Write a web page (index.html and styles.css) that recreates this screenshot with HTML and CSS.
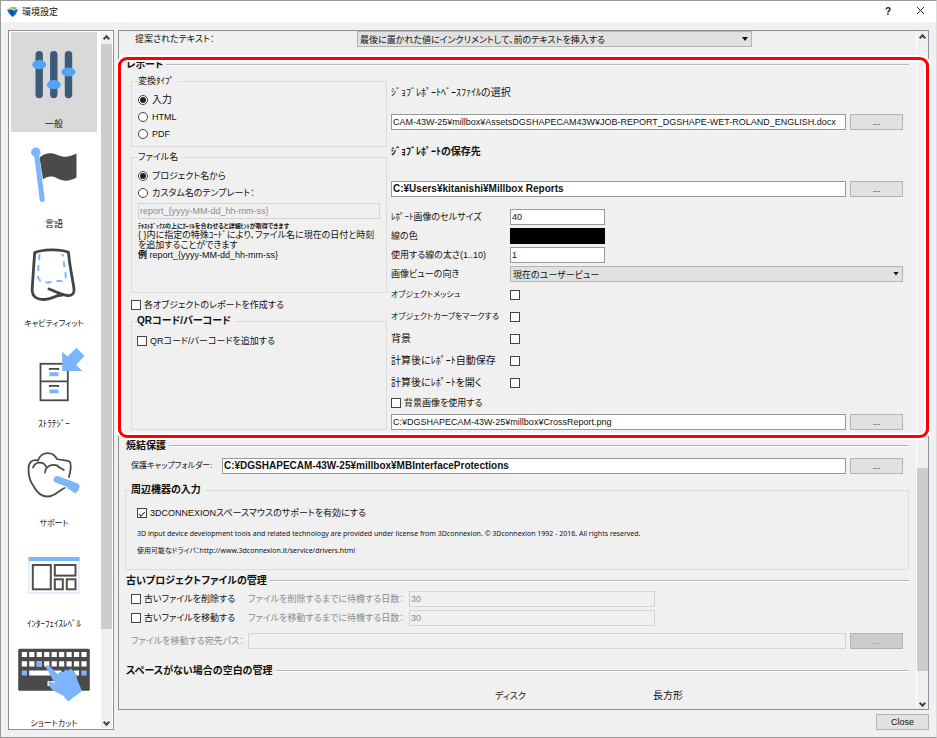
FILE: index.html
```html
<!DOCTYPE html>
<html lang="ja">
<head>
  <meta charset="UTF-8">
  <meta name="viewport" content="width=device-width, initial-scale=1.0">
  <title>環境設定</title>
  <link rel="stylesheet" href="styles.css">
</head>
<body>
  <div class="dialog">
    <!-- Title bar -->
    <header class="titlebar">
      <svg class="logo" viewBox="0 0 12 12">
        <path d="M1 3 Q5 0 11 2 L9 4 Q5 2 1 3Z" fill="#7fb93c"/>
        <path d="M0 4 Q5 3 8 5 L12 3 Q11 9 6 12 Q2 9 0 4Z" fill="#1268c3"/>
        <path d="M3 5 Q6 5 7 8 L6 10Z" fill="#0a3f86"/>
      </svg>
      <h1>環境設定</h1>
      <button class="title-btn" aria-label="ヘルプ">?</button>
      <button class="title-btn" aria-label="閉じる">
        <svg width="9" height="9" viewBox="0 0 9 9"><path d="M1 1 L8 8 M8 1 L1 8" stroke="#222" fill="none"/></svg>
      </button>
    </header>

    <div class="content">
      <!-- Category list -->
      <nav class="sidebar">
        <div class="categories">
          <a class="category active" href="#general">
            <svg viewBox="0 0 85 84">
              <g stroke="#3a5c78" stroke-width="7.4" stroke-linecap="round">
                <path d="M27.7 22.7V62.5M42.3 22.7V62.5M57 22.7V62.5"/>
              </g>
              <g fill="#55a3f0">
                <ellipse cx="27.7" cy="32.7" rx="7" ry="4.6"/>
                <ellipse cx="42.3" cy="52.7" rx="7" ry="4.6"/>
                <ellipse cx="57" cy="40" rx="7" ry="4.6"/>
              </g>
            </svg>
            <span>一般</span>
          </a>
          <a class="category" href="#language">
            <svg viewBox="0 0 85 84">
              <path d="M28 25.5 C34 20.5 40 20.5 46 23 C54 26.5 59 24 65 21.5 V45.5 C58 49.5 52 49.5 46 46.5 C40 43 35 45 31.5 47.5Z" fill="#4a4a4a"/>
              <path d="M25 22 L30.7 67.5" stroke="#7cb5fb" stroke-width="5" stroke-linecap="round"/>
              <circle cx="24.3" cy="20.3" r="4.7" fill="#7cb5fb"/>
            </svg>
            <span>言語</span>
          </a>
          <a class="category" href="#cavity">
            <svg viewBox="0 0 85 84">
              <g fill="none" stroke="#444" stroke-width="2.8" stroke-linecap="round" stroke-linejoin="round">
                <path d="M23.3 20.7 C30 17.5 48 16.5 57 20.3 C58 34 61 46 62.5 57 C63 62 60 64 56 63.5 C49 63 45 59.5 37.5 57"/>
                <path d="M23.3 20.7 C22 34 21.5 46 20.7 57 C20.5 65 25 67.5 33 67.5 C41 67.5 43 63 51 63"/>
              </g>
              <path d="M28 22 C27.5 30 26.5 36 26.5 45 C27.5 49 31 50.5 35 50.5 C41 50.5 43 48.5 51 49.3 C55 50 54.5 44 53.5 38 L51 22" fill="none" stroke="#7cb5fb" stroke-width="2" stroke-dasharray="6 5"/>
            </svg>
            <span class="kana">キャビティフィット</span>
          </a>
          <a class="category" href="#strategy">
            <svg viewBox="0 0 85 84">
              <g fill="none" stroke="#4a4a4a" stroke-width="1.8">
                <rect x="29" y="31.8" width="27.3" height="36.5"/>
                <path d="M29 49.3H56.3M38.3 38V36.8H46.7V38M38.3 55V53.8H46.7V55"/>
              </g>
              <path d="M38 40.3H47V44.3H38ZM38 57.5H47V61.3H38Z" fill="#7cb5fb"/>
              <path d="M50.7 39 V19.7 L56 24.5 L65 15.7 L73 24 L64.7 33 L71 39Z" fill="#7cb5fb"/>
            </svg>
            <span>ｽﾄﾗﾃｼﾞｰ</span>
          </a>
          <a class="category" href="#support">
            <svg viewBox="0 0 85 84">
              <g fill="none" stroke="#4a4a4a" stroke-width="1.8" stroke-linecap="round">
                <path d="M26.5 28.5 C20 27 17 31 17 37 C17 46 19.5 51 22 54 C25 60 29 64.5 36 64.5 C43 64.5 48 58 53 56"/>
                <path d="M26.5 28.5 C30 19 41 19 45.5 27 C51 29 54 27 58 29.5 C61 33 58.5 40 57.5 45"/>
                <path d="M21.5 35.5 C24 29 32 29.5 34.5 34.5"/>
                <path d="M33.5 40.5 C34 34 40 32 45.5 33.3 C47 36 50 36 52.3 38"/>
              </g>
              <path d="M45.7 47.5 L64.5 54.5" stroke="#7cb5fb" stroke-width="7" stroke-linecap="round"/>
              <path d="M54 55 L64 61.5 L68 57Z" fill="#7cb5fb"/>
            </svg>
            <span class="kana">サポート</span>
          </a>
          <a class="category" href="#level">
            <svg viewBox="0 0 85 84">
              <rect x="17.5" y="25.5" width="50" height="35.5" fill="#fff" stroke="#c9e0fd"/>
              <rect x="17" y="25" width="51" height="4" fill="#7cb5fb"/>
              <g fill="none" stroke="#4f4f4f" stroke-width="2">
                <rect x="21.3" y="33" width="18" height="24.3"/>
                <rect x="43.3" y="33" width="20.7" height="10.6"/>
                <rect x="43.3" y="47.3" width="8" height="10"/>
                <rect x="55.3" y="47.3" width="8.7" height="10"/>
              </g>
            </svg>
            <span>ｲﾝﾀｰﾌｪｲｽﾚﾍﾞﾙ</span>
          </a>
          <a class="category" href="#shortcut">
            <svg viewBox="0 0 85 84">
              <rect x="6.7" y="16.7" width="71.6" height="42" rx="1.5" fill="#4a4a4a"/>
              <g fill="none" stroke="#fff" stroke-width="5.2">
                <path d="M10.3 22.5H76" stroke-dasharray="5.2 2.25"/>
                <path d="M10.3 31.8H76" stroke-dasharray="5.2 2.25"/>
                <path d="M17.7 41H50M62.3 41H67.5M36 51.5H50"/>
              </g>
              <path d="M25.2 29.2h5.2v5.2h-5.2zM10.3 38.4h5.2v5.2h-5.2zM69.9 38.4h5.2v5.2h-5.2z" fill="#7cb5fb"/>
              <path d="M34.2 35 Q35 32 38 34 L46 42 L49 39.5 L52 40 L54 37.5 L57 38.5 L59 36.5 L63 40 Q65 42 65.5 47 L70.5 59 L56.5 69.5 L52 64 L41 58 L38 54.5 L37 50.5 L38.5 49 L43.5 51.5Z" fill="#7cb5fb"/>
            </svg>
            <span class="kana">ショートカット</span>
          </a>
        </div>
        <div class="scrollbar">
          <button class="arrow up" aria-label="上へ"></button>
          <div class="thumb sidebar-thumb"></div>
          <button class="arrow down" aria-label="下へ"></button>
        </div>
      </nav>

      <div class="right">
        <main class="panel">
          <form class="settings">
            <div class="suggest-row">
              <label for="suggest">提案されたテキスト：</label>
              <div class="select-wrap">
                <select id="suggest"><option>最後に置かれた値にインクリメントして、前のテキストを挿入する</option></select>
              </div>
            </div>

            <!-- Report -->
            <section class="report">
              <h2>レポート</h2>
              <div class="report-columns">
                <div class="report-left">
                  <fieldset class="type-box">
                    <legend>変換ﾀｲﾌﾟ</legend>
                    <label class="option half"><input type="radio" name="type" checked>入力</label>
                    <label class="option"><input type="radio" name="type">HTML</label>
                    <label class="option"><input type="radio" name="type">PDF</label>
                  </fieldset>
                  <fieldset class="name-box">
                    <legend>ファイル名</legend>
                    <label class="option"><input type="radio" name="filename" checked>プロジェクト名から</label>
                    <label class="option"><input type="radio" name="filename">カスタム名のテンプレート：</label>
                    <input type="text" class="template" aria-label="テンプレート" value="report_{yyyy-MM-dd_hh-mm-ss}" disabled>
                    <p class="hint">ﾃｷｽﾄﾎﾞｯｸｽの上にｶｰｿﾙを合わせると詳細ﾋﾝﾄが取得できます</p>
                    <p class="help">{ }内に指定の特殊ｺｰﾄﾞにより、ファイル名に現在の日付と時刻を追加することができます</p>
                    <p class="help"><b>例</b> report_{yyyy-MM-dd_hh-mm-ss}</p>
                  </fieldset>
                  <label class="check each-object"><input type="checkbox">各オブジェクトのレポートを作成する</label>
                  <fieldset class="qr-box">
                    <legend class="bold">QRコード/バーコード</legend>
                    <label class="check"><input type="checkbox">QRコード/バーコードを追加する</label>
                  </fieldset>
                </div>

                <div class="report-right">
                  <label class="path-label" for="base">ｼﾞｮﾌﾞﾚﾎﾟｰﾄﾍﾞｰｽﾌｧｲﾙの選択</label>
                  <div class="path-row">
                    <input type="text" id="base" value="CAM-43W-25¥millbox¥AssetsDGSHAPECAM43W¥JOB-REPORT_DGSHAPE-WET-ROLAND_ENGLISH.docx">
                    <button type="button" class="browse">...</button>
                  </div>
                  <label class="path-label bold" for="dest">ｼﾞｮﾌﾞﾚﾎﾟｰﾄの保存先</label>
                  <div class="path-row dest-row">
                    <input type="text" id="dest" class="bold" value="C:¥Users¥kitanishi¥Millbox Reports">
                    <button type="button" class="browse">...</button>
                  </div>
                  <div class="fields">
                    <label for="cell">ﾚﾎﾟｰﾄ画像のセルサイズ</label>
                    <input type="text" id="cell" class="short" value="40">
                    <label for="color">線の色</label>
                    <input type="color" id="color" class="short" value="#000000">
                    <label for="width">使用する線の太さ(1..10)</label>
                    <input type="text" id="width" class="short" value="1">
                    <label for="view">画像ビューの向き</label>
                    <div class="select-wrap">
                      <select id="view"><option>現在のユーザービュー</option></select>
                    </div>
                  </div>
                  <div class="fields checks">
                    <label for="mesh" class="kana">オブジェクトメッシュ</label>
                    <input type="checkbox" id="mesh">
                    <label for="curve" class="kana">オブジェクトカーブをマークする</label>
                    <input type="checkbox" id="curve">
                    <label for="back" class="half">背景</label>
                    <input type="checkbox" id="back">
                    <label for="autosave" class="half">計算後にﾚﾎﾟｰﾄ自動保存</label>
                    <input type="checkbox" id="autosave">
                    <label for="open" class="half">計算後にﾚﾎﾟｰﾄを開く</label>
                    <input type="checkbox" id="open">
                  </div>
                  <label class="check"><input type="checkbox">背景画像を使用する</label>
                  <div class="path-row image-row">
                    <input type="text" aria-label="背景画像" value="C:¥DGSHAPECAM-43W-25¥millbox¥CrossReport.png">
                    <button type="button" class="browse">...</button>
                  </div>
                </div>
              </div>
              <div class="highlight"></div>
            </section>

            <!-- Sintering -->
            <section>
              <h2>焼結保護</h2>
              <div class="path-row cap-row">
                <label for="cap" class="kana">保護キャップフォルダー:</label>
                <input type="text" id="cap" class="bold" value="C:¥DGSHAPECAM-43W-25¥millbox¥MBInterfaceProtections">
                <button type="button" class="browse">...</button>
              </div>
            </section>

            <fieldset class="device-box">
              <legend class="bold">周辺機器の入力</legend>
              <label class="check"><input type="checkbox" checked>3DCONNEXIONスペースマウスのサポートを有効にする</label>
              <p class="small">3D input device development tools and related technology are provided under license from 3Dconnexion. © 3Dconnexion 1992 - 2016. All rights reserved.</p>
              <p class="small">使用可能なドライバ：http://www.3dconnexion.it/service/drivers.html</p>
            </fieldset>

            <!-- Old project files -->
            <section class="old-files">
              <h2>古いプロジェクトファイルの管理</h2>
              <div class="days-row">
                <label class="check"><input type="checkbox">古いファイルを削除する</label>
                <label class="muted" for="del-days">ファイルを削除するまでに待機する日数：</label>
                <input type="text" id="del-days" value="30" disabled>
              </div>
              <div class="days-row">
                <label class="check"><input type="checkbox">古いファイルを移動する</label>
                <label class="muted" for="move-days">ファイルを移動するまでに待機する日数：</label>
                <input type="text" id="move-days" value="30" disabled>
              </div>
              <div class="path-row move-row">
                <label class="muted" for="move">ファイルを移動する宛先パス：</label>
                <input type="text" id="move" disabled>
                <button type="button" class="browse" disabled>...</button>
              </div>
            </section>

            <section class="space">
              <h2>スペースがない場合の空白の管理</h2>
              <div class="space-row">
                <span>ディスク</span>
                <span class="half">長方形</span>
              </div>
            </section>
          </form>
          <div class="scrollbar main-scroll">
            <button class="arrow up" aria-label="上へ"></button>
            <div class="thumb main-thumb"></div>
            <button class="arrow down" aria-label="下へ"></button>
          </div>
        </main>
        <footer>
          <button type="button" class="browse close">Close</button>
        </footer>
      </div>
    </div>
  </div>
</body>
</html>
```
FILE: styles.css
```css
* {
  box-sizing: border-box;
  margin: 0;
  padding: 0;
}

body {
  font-family: "Liberation Sans", "Noto Sans CJK JP", sans-serif;
  font-size: 9px;
  line-height: 16px;
  font-feature-settings: "palt";
  color: #111;
  background-color: #f0f0f0;
}

input,
select,
button {
  font: inherit;
  font-feature-settings: inherit;
  color: inherit;
}

.bold {
  font-size: 10px;
  font-weight: bold;
}

.half {
  font-size: 10px;
}

.kana {
  font-size: 8px;
}

.muted {
  color: #8c8c8c;
}

.dialog {
  height: 100vh;
  display: flex;
  flex-direction: column;
  border: 1px solid #999;
  border-right-color: #ddd;
}

/* Title bar */
.titlebar {
  display: flex;
  align-items: center;
  height: 21px;
  padding-left: 6px;
  background-color: #fff;
}

.logo {
  width: 11px;
  height: 11px;
  margin-right: 4px;
}

.titlebar h1 {
  flex: 1;
  font-size: 9px;
  font-weight: normal;
}

.title-btn {
  width: 32px;
  height: 20px;
  border: none;
  background: none;
  font-size: 10px;
  font-weight: bold;
}

.content {
  flex: 1;
  min-height: 0;
  display: flex;
  gap: 4px;
  padding: 8px 7px 7px;
}

/* Category list */
.sidebar {
  display: flex;
  width: 106px;
  padding: 1px;
  border: 1px solid #8a8f98;
  background-color: #fff;
}

.categories {
  flex: 1;
  padding: 0 4px 0 1px;
  overflow: hidden;
}

.category {
  display: block;
  height: 100px;
  text-align: center;
  color: #111;
  text-decoration: none;
}

.category svg {
  display: block;
  width: 100%;
  height: 84px;
}

.category span {
  display: block;
  white-space: nowrap;
}

.category.active {
  background-color: #d9d9d9;
}

/* Scroll bars */
.scrollbar {
  display: flex;
  flex-direction: column;
  width: 11px;
  background-color: #f0f0f0;
}

.arrow {
  display: flex;
  align-items: center;
  justify-content: center;
  height: 12px;
  border: none;
  background: none;
}

.arrow::before {
  content: "";
  width: 3px;
  height: 3px;
  border: solid #444;
  border-width: 2px 0 0 2px;
  transform: rotate(45deg);
}

.arrow.down {
  margin-top: auto;
}

.arrow.down::before {
  transform: rotate(225deg);
}

.thumb {
  background-color: #cdcdcd;
}

.sidebar-thumb {
  height: 84%;
}

.right {
  flex: 1;
  min-width: 0;
  display: flex;
  flex-direction: column;
  gap: 4px;
}

.panel {
  flex: 1;
  min-height: 0;
  display: flex;
  border: 1px solid #8a8f98;
}

.main-scroll {
  border-left: 1px solid #fff;
  width: 12px;
}

.main-thumb {
  margin-top: 425px;
  height: 30%;
}

.settings {
  flex: 1;
  min-width: 0;
}

/* Controls */
input[type="text"] {
  width: 100%;
  min-width: 0;
  height: 16px;
  padding: 0 1px;
  border: 1px solid #999;
  background-color: #fff;
}

input[type="text"]:disabled {
  border-color: #d4d4d4;
  background-color: #f0f0f0;
  color: #8c8c8c;
}

input[type="checkbox"],
input[type="radio"] {
  appearance: none;
  display: flex;
  align-items: center;
  justify-content: center;
  flex: none;
  width: 10px;
  height: 10px;
  border: 1px solid #444;
  background-color: #fff;
}

input[type="radio"] {
  border-radius: 50%;
}

input[type="radio"]:checked::before {
  content: "";
  width: 6px;
  height: 6px;
  border-radius: 50%;
  background-color: #222;
}

input[type="checkbox"]:checked::before {
  content: "";
  width: 5px;
  height: 2px;
  border: solid #333;
  border-width: 0 0 1px 1px;
  transform: rotate(-45deg);
}

.check,
.option {
  display: flex;
  align-items: center;
  gap: 3px;
  height: 16px;
  white-space: nowrap;
}

.option {
  height: 17px;
  gap: 4px;
}

.select-wrap {
  position: relative;
}

.select-wrap::after {
  content: "";
  position: absolute;
  right: 4px;
  top: 6px;
  width: 6px;
  height: 4px;
  background-color: #111;
  clip-path: polygon(0 0, 100% 0, 50% 100%);
}

select {
  appearance: none;
  display: block;
  width: 100%;
  height: 16px;
  padding: 0 2px;
  border: 1px solid #b4b4b4;
  border-radius: 0;
  background-color: #e1e1e1;
}

.browse {
  height: 16px;
  line-height: 14px;
  border: 1px solid #b4b4b4;
  background-color: #e1e1e1;
}

.browse:disabled {
  background-color: #ccc;
  color: #8c8c8c;
}

h2 {
  display: flex;
  align-items: center;
  gap: 3px;
  margin: 0 7px;
  font-size: 10px;
  line-height: 16px;
}

h2::after {
  content: "";
  flex: 1;
  height: 1px;
  border-top: 1px solid #b4b4b4;
  background-color: #fff;
}

fieldset {
  min-width: 0;
  border: 1px solid #dcdcdc;
  padding: 2px 6px 0;
}

legend {
  padding: 0 4px 0 0;
}

.suggest-row {
  display: grid;
  grid-template-columns: 222px 395px;
  padding-left: 16px;
  margin-bottom: 10px;
}

/* Report */
.report {
  position: relative;
  padding-bottom: 8px;
}

.highlight {
  position: absolute;
  inset: 0 -13px 0 -1px;
  border: 3px solid #f00;
  border-radius: 9px;
  box-shadow: 0 0 0 2px #fff, inset 0 0 0 2px #fff;
  pointer-events: none;
}

.report-columns {
  display: grid;
  grid-template-columns: 256px 1fr;
  gap: 4px;
  margin: 0 13px 0 12px;
}

.report-left,
.report-right {
  display: flex;
  flex-direction: column;
}

.type-box {
  padding-bottom: 4px;
}

.name-box {
  min-height: 144px;
  margin-top: 2px;
}

input.template {
  display: block;
  width: 100%;
  margin: 2px 0 3px;
}

.hint {
  font-size: 6px;
  font-weight: bold;
  line-height: 8px;
  white-space: nowrap;
}

.help {
  line-height: 10px;
}

.each-object {
  margin-top: 4px;
}

.qr-box {
  flex: 1;
  padding: 4px 5px 0;
}

.path-label {
  margin: 12px 0 13px;
  font-size: 10px;
}

.path-row {
  display: grid;
  grid-template-columns: 1fr 53px;
  gap: 4px;
}

.path-row + .path-label {
  margin: 14px 0 21px;
}

.dest-row {
  margin-bottom: 10px;
}

.fields {
  display: grid;
  grid-template-columns: 119px 1fr;
  grid-auto-rows: 19px;
  align-items: center;
  white-space: nowrap;
}

.fields .short {
  width: 95px;
}

input[type="color"] {
  appearance: none;
  height: 16px;
  border: none;
  background-color: #000;
}

input[type="color"]::-webkit-color-swatch-wrapper {
  padding: 0;
}

input[type="color"]::-webkit-color-swatch {
  border: none;
}

.checks {
  grid-auto-rows: 22px;
  margin: 1px 0;
}

.image-row {
  margin-top: 3px;
}

/* Lower sections */
.cap-row {
  grid-template-columns: 87px 1fr 53px;
  margin: 4px 13px 8px 12px;
}

.move-row {
  grid-template-columns: 113px 1fr 53px;
  margin: 7px 13px 14px 12px;
}

.cap-row,
.move-row {
  white-space: nowrap;
}

.device-box {
  min-height: 88px;
  margin: 0 7px 3px 6px;
  padding: 7px 10px 0 11px;
}

.device-box legend {
  margin-left: -6px;
}

.small {
  margin-top: 9px;
  font-family: "Noto Sans", "Noto Sans CJK JP", sans-serif;
  font-size: 7px;
  line-height: 8px;
}

.days-row {
  display: grid;
  grid-template-columns: 117px 161px 246px;
  margin: 2px 0 3px 12px;
  white-space: nowrap;
}

.space-row {
  display: grid;
  grid-template-columns: 158px 1fr;
  margin-top: 9px;
  padding-left: 376px;
}

footer {
  display: flex;
  justify-content: flex-end;
}

.close {
  width: 53px;
}
```
